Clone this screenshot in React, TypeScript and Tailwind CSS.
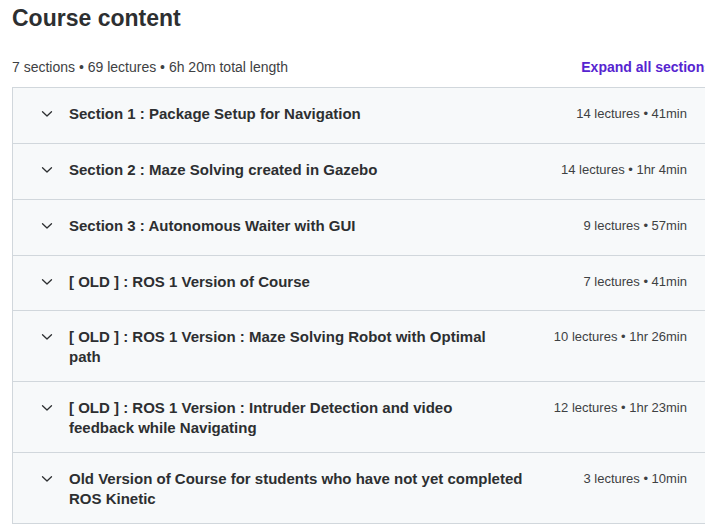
import React from 'react';

type Section = {
  title: string;
  meta: string;
};

const sections: Section[] = [
  { title: 'Section 1 : Package Setup for Navigation', meta: '14 lectures • 41min' },
  { title: 'Section 2 : Maze Solving created in Gazebo', meta: '14 lectures • 1hr 4min' },
  { title: 'Section 3 : Autonomous Waiter with GUI', meta: '9 lectures • 57min' },
  { title: '[ OLD ] : ROS 1 Version of Course', meta: '7 lectures • 41min' },
  {
    title: '[ OLD ] : ROS 1 Version : Maze Solving Robot with Optimal path',
    meta: '10 lectures • 1hr 26min',
  },
  {
    title: '[ OLD ] : ROS 1 Version : Intruder Detection and video feedback while Navigating',
    meta: '12 lectures • 1hr 23min',
  },
  {
    title: 'Old Version of Course for students who have not yet completed ROS Kinetic',
    meta: '3 lectures • 10min',
  },
];

const Chevron = () => (
  <svg width="12" height="8" viewBox="0 0 12 8" fill="none" className="shrink-0">
    <path d="M1.5 1.8 6 6 10.5 1.8" stroke="#2d2f31" strokeWidth="1.3" strokeLinecap="round" strokeLinejoin="round" />
  </svg>
);

const SectionRow = ({ section, first }: { section: Section; first: boolean }) => (
  <div
    className={`flex items-start bg-[#f7f9fa] pl-[28px] pr-[24px] pt-[16px] pb-[14px] ${
      first ? 'min-h-[55px]' : 'min-h-[55.75px] border-t border-[#d1d7dc]'
    }`}
  >
    <div className="flex h-[20px] w-[28px] shrink-0 items-center">
      <Chevron />
    </div>
    <div className="flex-1 text-[15px] font-bold leading-[20px] text-[#2d2f31]">{section.title}</div>
    <div className="ml-[36px] shrink-0 text-[13px] leading-[20px] text-[#3e4143] whitespace-nowrap">
      {section.meta}
    </div>
  </div>
);

const App = () => {
  return (
    <div className="w-[705px] h-[524px] overflow-hidden bg-white font-['Liberation_Sans',Arial,sans-serif]">
      <div className="ml-[12px] w-[700px]">
        <h2 className="pt-[3px] text-[23px] font-bold leading-[30px] text-[#2d2f31]">Course content</h2>
        <div className="mt-[26px] flex items-center justify-between pb-[12px]">
          <span className="text-[14px] leading-[16px] text-[#3e4143]">
            7 sections • 69 lectures • 6h 20m total length
          </span>
          <button type="button" className="text-[14px] font-bold leading-[16px] text-[#5624d0]">
            Expand all sections
          </button>
        </div>
        <div className="border border-[#d1d7dc]">
          {sections.map((section, index) => (
            <SectionRow key={index} section={section} first={index === 0} />
          ))}
        </div>
      </div>
    </div>
  );
};

export default App;
